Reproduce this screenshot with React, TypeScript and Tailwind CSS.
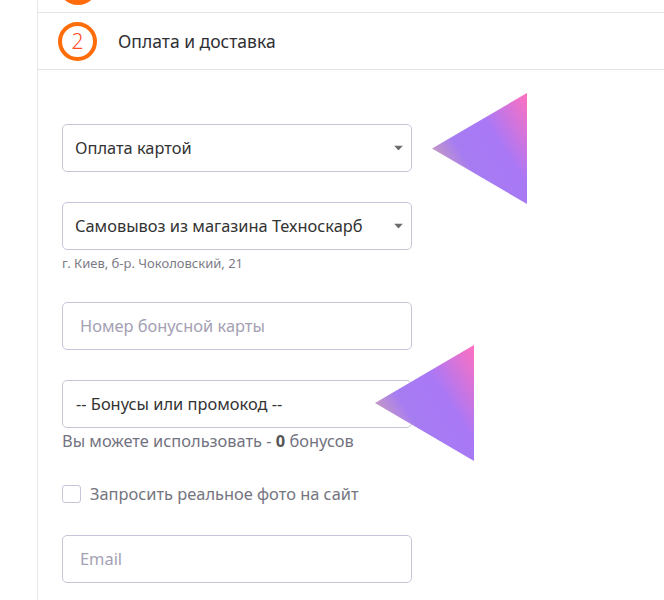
import type { ReactNode } from "react";

function Caret() {
  return (
    <svg width="9" height="5" viewBox="0 0 9 5" className="absolute right-[8px] top-1/2 -translate-y-1/2" aria-hidden="true">
      <polygon points="0,0 9,0 4.5,5" fill="#6b6b6b" />
    </svg>
  );
}

function Pointer({ id, left, top, w, h }: { id: string; left: number; top: number; w: number; h: number }) {
  return (
    <svg
      width={w}
      height={h}
      viewBox={`0 0 ${w} ${h}`}
      className="absolute pointer-events-none"
      style={{ left, top }}
      aria-hidden="true"
    >
      <defs>
        <linearGradient id={id} x1="1" y1="0" x2="0" y2="0.75">
          <stop offset="0" stopColor="#ff70c0" />
          <stop offset="0.4" stopColor="#a978f6" />
          <stop offset="0.7" stopColor="#a67cf2" />
          <stop offset="1" stopColor="#d6aaa8" />
        </linearGradient>
      </defs>
      <polygon points={`0,${h / 2} ${w},0 ${w},${h}`} fill={`url(#${id})`} />
    </svg>
  );
}

function Field({ children, caret }: { children: ReactNode; caret?: boolean }) {
  return (
    <div className="relative w-[350px] h-[48px] rounded-[5px] border border-[#c8c5db] bg-white flex items-center">
      {children}
      {caret && <Caret />}
    </div>
  );
}

export default function App() {
  return (
    <div className="relative w-full h-[600px] overflow-hidden bg-white text-[#333] font-['Noto_Sans',sans-serif]">
      <div className="ml-[37px] h-full border-l border-[#e6e6e6]">
        <div className="h-[13px] overflow-hidden border-b border-[#e4e4e4]">
          <div className="ml-[20px] -mt-[35px] w-[40px] h-[40px] rounded-full bg-[#ff6a0d]" />
        </div>
        <div className="h-[57px] border-b border-[#e4e4e4] flex items-center pl-[20px]">
          <div className="w-[39px] h-[39px] rounded-full border-[4px] border-[#ff6c0a] flex items-center justify-center text-[21px] leading-none font-light text-[#ff4d26]">
            2
          </div>
          <span className="ml-[21px] text-[17.5px] text-[#2f2f35]">Оплата и доставка</span>
        </div>

        <div className="pl-[24px] pt-[54px] flex flex-col text-[16.4px]">
          <Field caret>
            <span className="pl-[12px] text-[#333]">Оплата картой</span>
          </Field>

          <div className="mt-[30px]">
            <Field caret>
              <span className="pl-[12px] text-[#333]">Самовывоз из магазина Техноскарб</span>
            </Field>
            <div className="mt-[5px] text-[13px] leading-4 text-[#7b7b86]">г. Киев, б-р. Чоколовский, 21</div>
          </div>

          <div className="mt-[31px]">
            <Field>
              <span className="pl-[17px] text-[#a3a1b3]">Номер бонусной карты</span>
            </Field>
          </div>

          <div className="mt-[30px]">
            <Field>
              <span className="pl-[13px] text-[#333]">-- Бонусы или промокод --</span>
            </Field>
            <div className="leading-[26px] text-[#73737f]">
              Вы можете использовать - <b className="font-bold text-[#555]">0</b> бонусов
            </div>
          </div>

          <div className="mt-[30px] h-[20px] flex items-center">
            <div className="w-[19px] h-[18px] rounded-[3px] border border-[#c8c5db] bg-white" />
            <span className="ml-[9px] text-[#75757f]">Запросить реальное фото на сайт</span>
          </div>

          <div className="mt-[31px]">
            <Field>
              <span className="pl-[17px] text-[#a3a1b3]">Email</span>
            </Field>
          </div>
        </div>
      </div>

      <Pointer id="g1" left={432} top={93} w={95} h={111} />
      <Pointer id="g2" left={375} top={345} w={99} h={116} />
    </div>
  );
}
